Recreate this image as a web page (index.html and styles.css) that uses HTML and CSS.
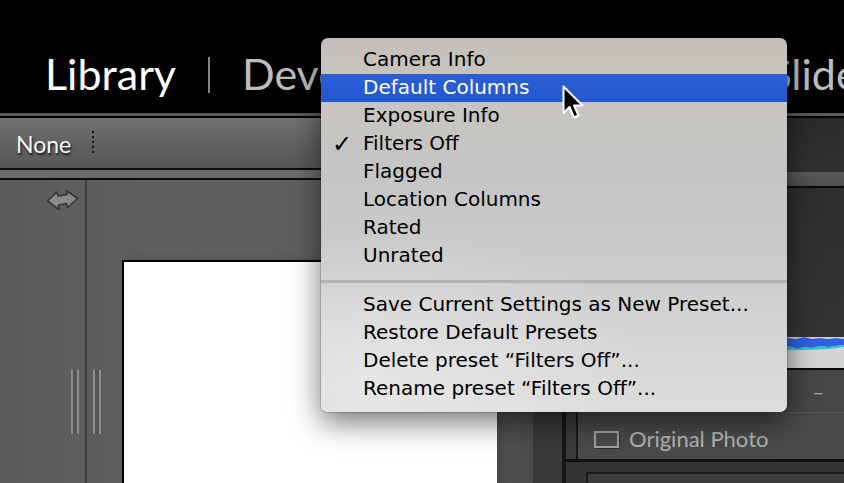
FILE: index.html
```html
<!DOCTYPE html>
<html lang="en">
<head>
<meta charset="utf-8">
<title>Library</title>
<link rel="stylesheet" href="styles.css">
</head>
<body>
<div class="app">
  <header class="modules">
    <span class="module active">Library</span>
    <span class="sep"></span>
    <span class="module">Develop</span>
    <span class="sep tight"></span>
    <span class="module">Map</span>
    <span class="sep tight"></span>
    <span class="module">Book</span>
    <span class="sep tight"></span>
    <span class="module">Slideshow</span>
  </header>

  <div class="work">
    <section class="center">
      <div class="filterbar">
        <span class="preset-label">None</span>
        <span class="dots"></span>
      </div>
      <div class="subbar"></div>
      <div class="stage">
        <aside class="strip">
          <svg class="swap" width="34" height="22" viewBox="0 0 34 22">
            <path d="M1.5 12 L11 3 L12 7 L21 5.5 L20.5 1.5 L31.5 9.5 L21.5 18.5 L20.5 14.5 L12.5 16 L13 20.5 Z" fill="#8a8a8a" stroke="#343434" stroke-width="1.6" stroke-linejoin="round"/>
          </svg>
          <span class="grip grip-left"></span>
        </aside>
        <div class="divider"></div>
        <div class="canvas">
          <span class="grip grip-right"></span>
          <div class="photo"></div>
        </div>
      </div>
    </section>

    <section class="right">
      <div class="gutter"></div>
      <div class="panels">
        <div class="nav-head"></div>
        <div class="nav-band"></div>
        <div class="histogram">
          <svg class="histo" width="278" height="31" viewBox="0 0 278 31" preserveAspectRatio="none">
            <rect x="0" y="0" width="278" height="31" fill="#d4d4d4"/>
            <path d="M0 1 L8 2 L14 0 L20 2 L26 1 L34 2 L40 0 L48 1 L56 2 L62 0 L70 2 L78 1 L86 2 L94 0 L102 2 L110 1 L118 2 L126 1 L134 2 L142 0 L150 2 L158 1 L166 2 L174 1 L182 2 L190 0 L198 2 L206 1 L214 2 L222 1 L230 2 L238 0 L246 2 L254 1 L262 2 L270 1 L278 2 L278 8 L270 9 L262 10 L254 9 L246 11 L238 10 L232 12 L226 10 L218 9 L210 11 L200 10 L190 9 L180 10 L170 8 L160 9 L150 8 L140 7 L130 7 L120 8 L110 7 L100 6 L90 7 L80 6 L70 7 L60 6 L50 7 L40 6 L30 7 L20 6 L10 7 L0 6 Z" fill="#2f60e2"/>
            <path d="M0 6 L10 7 L20 6 L30 7 L40 6 L50 7 L60 6 L70 7 L80 6 L90 7 L100 6 L110 7 L120 8 L130 7 L140 7 L150 8 L160 9 L170 8 L180 10 L190 9 L200 10 L210 11 L218 9 L226 10 L232 12 L238 10 L246 11 L254 9 L262 10 L270 9 L278 8 L278 10 L262 12 L238 13 L210 13 L180 12 L150 10 L120 9 L90 8 L60 8 L30 8 L0 8 Z" fill="#2cc8c4"/>
          </svg>
        </div>
        <div class="panel-head"><span class="collapse">–</span></div>
        <div class="panel-body">
          <div class="option">
            <span class="checkbox"></span>
            <span class="option-label">Original Photo</span>
          </div>
        </div>
        <div class="panel-next"><div class="inner-box"></div></div>
      </div>
    </section>
  </div>

  <div class="menu">
    <ul class="menu-group">
      <li class="item">Camera Info</li>
      <li class="item selected">Default Columns</li>
      <li class="item">Exposure Info</li>
      <li class="item checked"><span class="check">✓</span>Filters Off</li>
      <li class="item">Flagged</li>
      <li class="item">Location Columns</li>
      <li class="item">Rated</li>
      <li class="item">Unrated</li>
    </ul>
    <div class="menu-sep"></div>
    <ul class="menu-group">
      <li class="item">Save Current Settings as New Preset...</li>
      <li class="item">Restore Default Presets</li>
      <li class="item">Delete preset “Filters Off”...</li>
      <li class="item">Rename preset “Filters Off”...</li>
    </ul>
  </div>

  <svg class="pointer" width="24" height="36" viewBox="0 0 24 36">
    <path d="M1.5 1.5 L1.5 28 L7.5 22 L12 32.5 L16.5 30.5 L12 20.5 L20.5 20.5 Z" fill="#000" stroke="#fff" stroke-width="2" stroke-linejoin="round"/>
  </svg>
</div>
</body>
</html>
```

FILE: styles.css
```css
* {
  box-sizing: border-box;
}

html, body {
  margin: 0;
  padding: 0;
  background: #000;
}

.app {
  position: relative;
  width: 844px;
  height: 483px;
  overflow: hidden;
  font-family: "Lato", "Open Sans", sans-serif;
}

/* Module picker */
.modules {
  height: 113px;
  background: #000;
  display: flex;
  align-items: flex-start;
  padding: 52px 0 0 45px;
  white-space: nowrap;
}

.module {
  font-size: 43px;
  color: #bdbdbd;
  line-height: 1;
}

.module.active {
  color: #fff;
}

.sep {
  width: 2px;
  height: 36px;
  margin: 5px 32px 0;
  background: #858585;
  flex: none;
}

.sep.tight {
  margin-left: 30px;
  margin-right: 30px;
}

/* Work area */
.work {
  height: 370px;
  display: flex;
  border-top: 3px solid #5a5a5a;
  padding-top: 2px;
  background: #000;
}

.center {
  width: 533px;
  flex: none;
  display: flex;
  flex-direction: column;
}

.filterbar {
  height: 52px;
  background: linear-gradient(#727272, #5f5f5f 60%, #575757);
  border-bottom: 2px solid #0c0c0c;
  display: flex;
  align-items: center;
  padding-left: 16px;
  gap: 21px;
  flex: none;
}

.preset-label {
  font-size: 23px;
  color: #f4f4f4;
  text-shadow: 1px 2px 2px rgba(0, 0, 0, 0.75);
  padding-top: 2px;
}

.dots {
  width: 2px;
  height: 24px;
  background: repeating-linear-gradient(#111 0 2px, transparent 2px 5px);
}

.subbar {
  height: 10px;
  background: #6b6b6b;
  border-bottom: 2px solid #0c0c0c;
  flex: none;
}

.stage {
  flex: 1;
  display: flex;
}

.strip {
  width: 85px;
  flex: none;
  background: linear-gradient(90deg, #5a5a5a, #5f5f5f);
  position: relative;
}

.swap {
  position: absolute;
  left: 46px;
  top: 9px;
}

.grip {
  position: absolute;
  top: 190px;
  width: 8px;
  height: 64px;
  border-left: 2px solid #8e8e8e;
  border-right: 2px solid #8e8e8e;
  background: #555;
}

.grip-left {
  left: 71px;
}

.grip-right {
  left: 6px;
}

.divider {
  width: 2px;
  flex: none;
  background: #3e3e3e;
}

.canvas {
  flex: 1;
  position: relative;
  background: linear-gradient(90deg, #5d5d5d, #606060 20%, #5d5d5d 80%, #4c4c4c);
  padding: 80px 0 0 35px;
}

.photo {
  width: 375px;
  height: 260px;
  background: #fff;
  border-top: 2px solid #000;
  border-left: 2px solid #000;
  box-shadow: 6px 0 10px rgba(0, 0, 0, 0.15);
}

/* Right panel column */
.right {
  flex: 1;
  display: flex;
}

.gutter {
  width: 33px;
  flex: none;
  background: #3a3a3a;
  border-right: 4px solid #161616;
}

.panels {
  flex: 1;
  display: flex;
  flex-direction: column;
  background: #2c2c2c;
}

.nav-head {
  height: 54px;
  background: linear-gradient(#2a2a2a, #313131);
  flex: none;
}

.nav-band {
  height: 16px;
  background: linear-gradient(#5a5a5a, #4e4e4e);
  border-bottom: 2px solid #0a0a0a;
  flex: none;
}

.histogram {
  height: 182px;
  flex: none;
  background: linear-gradient(#2e2e2e, #363636);
  display: flex;
  flex-direction: column;
  justify-content: flex-end;
  border-bottom: 2px solid #0a0a0a;
}

.histo {
  display: block;
}

.panel-head {
  height: 42px;
  flex: none;
  background: #464646;
  display: flex;
  justify-content: flex-end;
  align-items: center;
  padding-right: 20px;
}

.collapse {
  color: #a8a8a8;
  font-size: 20px;
}

.panel-body {
  height: 50px;
  flex: none;
  background: #3c3c3c;
  padding-left: 10px;
  border-bottom: 3px solid #111;
}

.option {
  height: 100%;
  display: flex;
  align-items: center;
  gap: 10px;
  padding: 7px 0 0 16px;
  background: #4a4a4a;
  border-left: 2px solid #1a1a1a;
  border-top: 1px solid #555;
}

.checkbox {
  width: 25px;
  height: 17px;
  border: 2px solid #a2a2a2;
  box-shadow: 1px 1px 0 rgba(0, 0, 0, 0.4);
}

.option-label {
  font-size: 22px;
  color: #b4b4b4;
  padding-bottom: 2px;
}

.panel-next {
  flex: 1;
  background: #333;
  padding: 10px 0 0 20px;
}

.inner-box {
  height: 100%;
  background: #3b3b3b;
  border-top: 2px solid #1c1c1c;
  border-left: 2px solid #1c1c1c;
}

/* Preset menu */
.menu {
  position: absolute;
  left: 321px;
  top: 38px;
  width: 466px;
  height: 374px;
  padding: 8px 0 9px;
  border-radius: 7px;
  background:
    radial-gradient(ellipse 60% 40% at 10% 90%, rgba(255, 255, 255, 0.35), transparent),
    linear-gradient(#c2bfb9 0%, #c9c5bd 13%, #c5c5c5 35%, #cbcbcb 60%, #d7d7d7 85%, #dcdcdc 100%);
  box-shadow: 0 10px 30px rgba(0, 0, 0, 0.55), 0 0 0 1px rgba(0, 0, 0, 0.15);
  font-family: "DejaVu Sans", sans-serif;
}

.menu-group {
  list-style: none;
  margin: 0;
  padding: 0;
}

.item {
  position: relative;
  height: 28px;
  line-height: 26px;
  padding-left: 42px;
  font-size: 20px;
  color: #000;
  white-space: nowrap;
}

.item.selected {
  background: linear-gradient(#2c5fd6, #2357cf);
  color: #fff;
}

.check {
  position: absolute;
  left: 11px;
  top: 1px;
  font-size: 24px;
  font-weight: bold;
}

.menu-sep {
  height: 3px;
  margin: 10px 0 8px;
  background: #b2b2b2;
}

.pointer {
  position: absolute;
  left: 562px;
  top: 85px;
}
```
